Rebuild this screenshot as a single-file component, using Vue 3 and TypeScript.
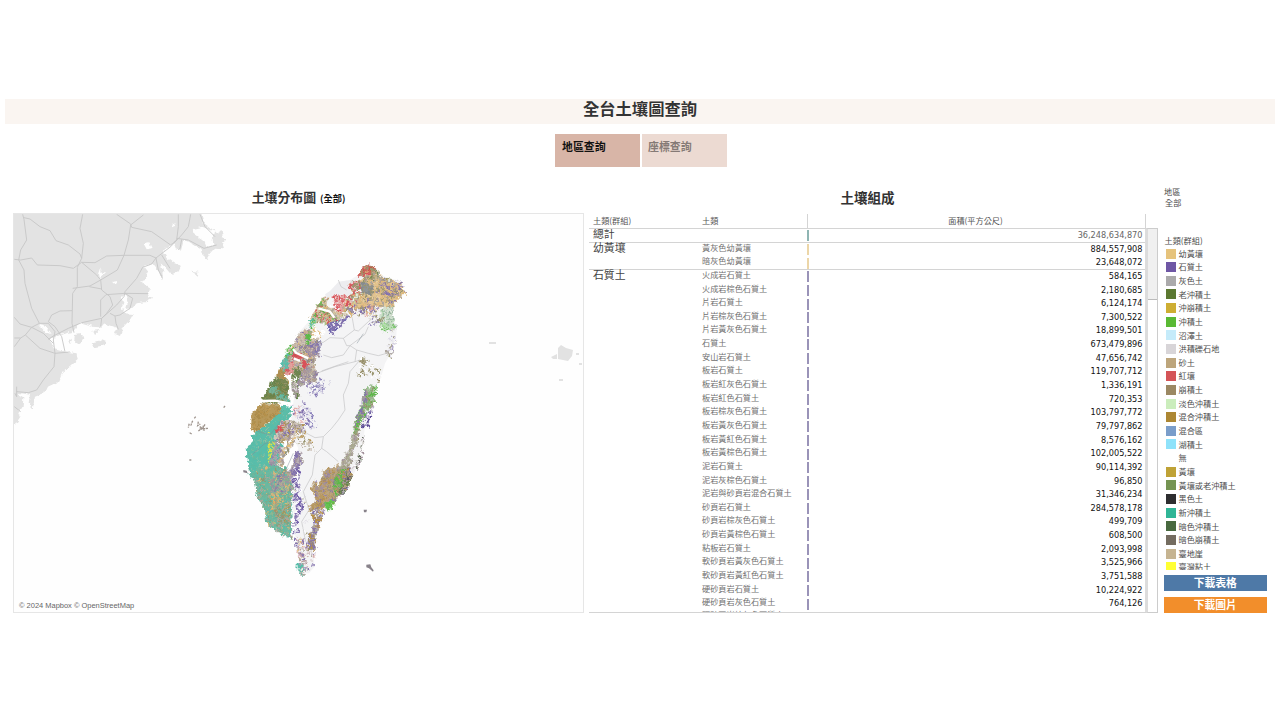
<script setup lang="ts">
interface Row { group?: string; name: string; area: string; color: string; line?: boolean; total?: boolean }

const PURPLE = '#9a93b8'
const stony: [string, string][] = [
  ['火成岩石質土', '584,165'], ['火成岩棕色石質土', '2,180,685'], ['片岩石質土', '6,124,174'],
  ['片岩棕灰色石質土', '7,300,522'], ['片岩黃灰色石質土', '18,899,501'], ['石質土', '673,479,896'],
  ['安山岩石質土', '47,656,742'], ['板岩石質土', '119,707,712'], ['板岩紅灰色石質土', '1,336,191'],
  ['板岩紅色石質土', '720,353'], ['板岩棕灰色石質土', '103,797,772'], ['板岩黃灰色石質土', '79,797,862'],
  ['板岩黃紅色石質土', '8,576,162'], ['板岩黃棕色石質土', '102,005,522'], ['泥岩石質土', '90,114,392'],
  ['泥岩灰棕色石質土', '96,850'], ['泥岩與砂頁岩混合石質土', '31,346,234'], ['砂頁岩石質土', '284,578,178'],
  ['砂頁岩棕灰色石質土', '499,709'], ['砂頁岩黃棕色石質土', '608,500'], ['粘板岩石質土', '2,093,998'],
  ['軟砂頁岩黃灰色石質土', '3,525,966'], ['軟砂頁岩黃紅色石質土', '3,751,588'], ['硬砂頁岩石質土', '10,224,922'],
  ['硬砂頁岩灰色石質土', '764,126'], ['硬砂頁岩棕灰色石質土', ''],
]
const rows: Row[] = [
  { group: '總計', name: '', area: '36,248,634,870', color: '#8fb5b3', line: true, total: true },
  { group: '幼黃壤', name: '黃灰色幼黃壤', area: '884,557,908', color: '#ecd6a8' },
  { name: '暗灰色幼黃壤', area: '23,648,072', color: '#ecd6a8', line: true },
  ...stony.map(([name, area], i) => ({ group: i === 0 ? '石質土' : undefined, name, area, color: PURPLE })),
]

const legend: [string, string][] = [
  ['幼黃壤', '#e6c37c'], ['石質土', '#6f57a5'], ['灰色土', '#abaaab'], ['老沖積土', '#5c7831'],
  ['沖崩積土', '#ceae33'], ['沖積土', '#5ab934'], ['沼澤土', '#c5ebfa'], ['洪積礫石地', '#d8d5d8'],
  ['砂土', '#bda57b'], ['紅壤', '#d45457'], ['崩積土', '#9b8863'], ['淡色沖積土', '#cbedbc'],
  ['混合沖積土', '#ad8733'], ['混合區', '#7a9dca'], ['湖積土', '#8fe2fa'], ['無', '#ffffff'],
  ['黃壤', '#bfa236'], ['黃壤或老沖積土', '#759452'], ['黑色土', '#2e2e30'], ['新沖積土', '#30b596'],
  ['暗色沖積土', '#48693f'], ['暗色崩積土', '#746c60'], ['臺地崖', '#c6b491'], ['臺灣粘土', '#ffff33'],
]

/* Soil regions: outline, optional base fill, speckle palette, speckle count and size */
interface Region { pts: string; base?: string; colors: string[]; n: number; s: number }
const T = '#58bda9', TN = '#deb877', PU = '#8373ae', OL = '#99946e', GR = '#aea79c', GD = '#66834a'
const RD = '#d8525a', GN = '#5cb848', BR = '#b58f48', LG = '#b9dbb5', MV = '#a3929c', PK = '#e3a5a0'
const regions: Region[] = [
  { pts: '375,75 398,58 440,66 470,78 500,82 500,104 516,110 490,130 465,158 425,150 395,165 350,152 362,130 385,118 378,95', base: '#e2c391', colors: [TN, TN, TN, PU, OL, '#d5b48a', '#e9cf9c', GR], n: 620, s: 4 },
  { pts: '455,85 480,95 470,118 448,112', colors: [PU, '#6a62ac', TN], n: 50, s: 5 },
  { pts: '480,78 500,78 498,100 484,95', colors: [PU], n: 22, s: 4 },
  { pts: '395,145 430,150 425,180 400,192 388,175', colors: [TN, PK, PU, OL], n: 70, s: 4 },
  { pts: '382,80 400,85 415,95 410,120 385,115 372,98', base: '#90959a', colors: ['#8b9195', '#82888f', OL], n: 60, s: 4 },
  { pts: '400,28 424,40 420,57 400,54 385,67 371,60 382,36', base: '#cf6b66', colors: [RD, RD, OL, TN, '#bf5b45'], n: 110, s: 4 },
  { pts: '418,42 428,45 436,60 470,75 470,82 400,72 385,80 384,66 402,54', colors: [TN, OL, '#e2c391', GR, GD], n: 130, s: 4 },
  { pts: '345,75 375,80 375,95 355,108 338,98', colors: [RD, TN, OL, GR, RD], n: 110, s: 4 },
  { pts: '295,118 330,118 352,135 315,170 290,185 265,165 290,150', colors: [RD, RD, '#fff', PK], n: 230, s: 5 },
  { pts: '335,120 375,105 385,118 350,145 338,165 322,160', colors: [GR, TN, LG, OL, RD], n: 105, s: 4 },
  { pts: '262,128 278,128 275,150 310,172 335,175 290,205 260,205 228,200 222,190', base: '#d6c9b1', colors: [OL, GR, TN, GN, RD, '#c5b695'], n: 260, s: 4 },
  { pts: '225,190 242,195 240,212 220,218', colors: [GN, T, LG], n: 50, s: 4 },
  { pts: '275,205 340,180 325,195 285,235 280,220', colors: [PU, '#6a62ac'], n: 60, s: 5 },
  { pts: '330,150 400,155 385,178 345,180', colors: [PU, TN, OL], n: 70, s: 4 },
  { pts: '440,160 474,153 473,190 482,216 440,212 425,205', base: '#d3dfd0', colors: [LG, '#8fae98', '#a6bbb0', '#c7dfc4', '#e4ebe2'], n: 180, s: 4 },
  { pts: '430,197 450,205 482,210 470,222 440,222', colors: [GN, LG, '#8ed67d'], n: 45, s: 5 },
  { pts: '400,205 445,180 445,190 400,218', colors: [PU, OL], n: 30, s: 4 },
  { pts: '472,218 485,222 482,240 472,300 448,310 455,265', colors: [PU, OL, GR, '#dedbe6'], n: 60, s: 4 },
  { pts: '190,235 212,220 250,235 248,262 238,320 245,372 232,385 190,360 150,350 145,310 172,272', base: '#cfc5b6', colors: [GR, MV, '#c6a28b', OL, '#b7a999', '#d2c6b4', PU, TN], n: 650, s: 4 },
  { pts: '212,232 225,230 222,258 215,268', colors: [GN], n: 26, s: 5 },
  { pts: '163,268 178,282 150,312 146,305', colors: [GN, GN, T], n: 55, s: 4 },
  { pts: '235,215 262,230 255,248 225,242', colors: ['#f2eee5', '#fff', TN], n: 70, s: 5 },
  { pts: '220,260 258,258 250,300 215,300', colors: [PU, MV, '#8683ad'], n: 120, s: 4 },
  { pts: '172,292 205,300 198,314 170,307', base: RD, colors: [RD, '#c9504f'], n: 26, s: 4 },
  { pts: '152,320 175,318 168,352 150,358', base: '#d76b70', colors: [RD, PK], n: 60, s: 4 },
  { pts: '200,315 218,320 215,337 205,338', base: RD, colors: [RD], n: 14, s: 4 },
  { pts: '170,340 195,332 192,370 172,390', colors: [GD, OL, '#6f8651'], n: 70, s: 5 },
  { pts: '146,308 162,315 150,352 135,340', base: '#5dbfae', colors: [T, GR], n: 50, s: 4 },
  { pts: '135,338 150,350 150,366 170,378 150,376 122,366', base: '#b99551', colors: [BR, '#a68c57'], n: 60, s: 4 },
  { pts: '170,380 185,385 190,420 180,430 165,395', colors: [GR, MV, GD], n: 60, s: 4 },
  { pts: '120,366 158,378 162,438 120,443 78,440 98,398', base: '#73864f', colors: [GD, '#7e8a4d', '#6c844f', OL, '#8c8c55'], n: 260, s: 4 },
  { pts: '106,378 125,405 162,430 160,440 130,430 105,400', colors: [T, '#78b398'], n: 65, s: 5 },
  { pts: '82,443 120,448 142,455 135,480 95,505 60,535 48,520 50,480 62,462', base: '#b89a5c', colors: [BR, '#b8985b', '#a88a49', '#c29d5a'], n: 260, s: 4 },
  { pts: '140,452 168,455 165,490 140,510 120,530 95,545 60,560 35,575 40,640 60,680 95,665 110,610 135,585 125,545 150,520 135,480', base: '#5dbfab', colors: [T, T, '#66c3b1', '#65aa93'], n: 100, s: 4 },
  { pts: '50,540 95,508 140,472 168,460 160,495 135,520 135,552 110,590 115,625 100,670 72,690 45,655 50,620 35,610 40,580 52,565', base: '#59bdaa', colors: [T, '#63b9a1', '#71b897', '#55bdab', '#8cc0a6'], n: 420, s: 4 },
  { pts: '95,530 112,540 90,575 100,590 88,618 98,622 108,600 112,555', colors: ['#d8e04d', '#e9ec4c', T], n: 64, s: 5 },
  { pts: '140,495 170,495 200,510 215,535 185,530 175,550 140,565 118,555 125,525', base: '#d1c6b9', colors: [GR, MV, BR, OL, PU, '#c3ac92', '#fff'], n: 230, s: 4 },
  { pts: '122,512 145,505 135,525 120,525', colors: [RD, PK], n: 28, s: 4 },
  { pts: '120,560 140,570 132,620 112,645 105,610', base: '#b0a4b2', colors: [PU, MV, T, GR], n: 130, s: 4 },
  { pts: '140,575 180,545 170,570 145,600 140,640 118,650', colors: [MV, GR, OL, TN], n: 120, s: 4 },
  { pts: '182,590 200,590 195,620 175,660 150,680 135,672 168,640', base: '#beb4be', colors: [PU, MV, GR], n: 170, s: 4 },
  { pts: '65,640 110,630 150,640 172,680 170,750 168,850 130,830 93,803 90,765 65,720 60,680 40,660', base: '#6db8a0', colors: [T, T, '#77ae8d', GR, OL, '#5bbaa4', TN], n: 700, s: 4 },
  { pts: '100,675 135,650 170,655 172,700 130,710 112,735', colors: [PU, MV, TN, GR], n: 210, s: 4 },
  { pts: '105,720 130,700 125,770 105,765', colors: [TN, '#dda461', T], n: 100, s: 4 },
  { pts: '118,760 165,740 165,800 130,810', colors: [OL, GR, '#78a486', BR], n: 120, s: 4 },
  { pts: '178,625 190,630 192,710 205,750 190,770 185,830 172,830 180,750 170,700', colors: [PU, '#6f5ba8', PU, '#fff'], n: 180, s: 5 },
  { pts: '172,840 205,850 200,920 188,910', colors: [PU, GR, TN, '#dba8b8'], n: 50, s: 4 },
  { pts: '190,870 240,870 235,935 215,955 188,930', colors: [PU, '#b49a9e', '#d7b0ad', GR], n: 62, s: 4 },
  { pts: '188,925 200,925 202,960 190,955', colors: [T, T, GR], n: 30, s: 5 },
  { pts: '225,765 265,765 255,805 240,835 234,882 215,875 222,830 235,800', colors: [PU, PU, BR, GR], n: 170, s: 5 },
  { pts: '220,835 240,840 235,880 215,875', colors: [BR, OL, PU], n: 80, s: 4 },
  { pts: '270,640 300,635 325,625 345,640 348,675 328,705 300,735 275,755 225,768 218,758 245,738 228,700 240,670 250,700 262,660', base: '#bda580', colors: [BR, BR, PU, OL, '#b79a62', MV], n: 500, s: 4 },
  { pts: '305,640 330,625 318,690 298,720 290,700', colors: [GN, '#80b369', OL], n: 75, s: 5 },
  { pts: '270,740 298,732 288,760 275,762', base: '#67c653', colors: [GN], n: 16, s: 5 },
  { pts: '325,650 352,630 345,675 322,715 308,710 320,685', colors: ['#5a5a60', PU, GD, MV], n: 75, s: 4 },
  { pts: '410,388 422,395 408,455 390,470 375,500 365,535 352,540 360,500 370,470 382,440 388,405', base: '#a9c49f', colors: [GN, '#85ad78', OL, GR, '#77bb68'], n: 210, s: 5 },
  { pts: '388,400 396,405 380,470 355,530 355,510 378,440', colors: [PU, MV], n: 55, s: 4 },
  { pts: '405,455 412,455 398,505 385,515 380,500', colors: [PU, '#5b4b95', '#fff'], n: 36, s: 5 },
  { pts: '355,535 370,535 355,580 345,625 325,640 310,640 330,600 345,570', base: '#cbcac1', colors: [GR, '#a9aa90', OL, MV], n: 190, s: 4 },
  { pts: '376,545 388,545 378,600 365,640 350,650 355,630 372,590', colors: ['#58654e', GR, '#555', MV, '#fff'], n: 60, s: 4 },
  { pts: '375,305 390,300 400,325 430,335 430,370 400,365 360,355', colors: [OL, '#98906a', '#fff'], n: 50, s: 5 },
  { pts: '215,370 240,355 265,370 270,395 240,430 220,420', colors: [PU, '#8c83bc', '#fff'], n: 65, s: 4 },
  { pts: '200,440 225,460 245,520 215,515 190,480', colors: [PU, '#8c83bc', '#dddbe8'], n: 60, s: 4 },
  { pts: '165,440 195,450 210,500 175,495', colors: [PU, '#c9c3dc', PK], n: 34, s: 4 },
  { pts: '215,340 245,345 240,375 190,390 185,375', colors: [GR, MV, PU], n: 95, s: 4 },
  { pts: '190,530 230,550 240,590 215,580 185,570', colors: [OL, BR, '#b7a999'], n: 34, s: 4 },
  { pts: '245,375 300,370 250,410', colors: ['#c9c6dc', '#aaa5c9'], n: 30, s: 3 },
  { pts: '200,700 222,770 215,850 198,830', colors: ['#d9d6df', OL, '#fff'], n: 20, s: 3 },
]

let seed = 20240
const rnd = () => {
  seed = (seed * 1664525 + 1013904223) % 4294967296
  return seed / 4294967296
}
const inside = (x: number, y: number, p: number[][]) => {
  let r = false
  for (let i = 0, j = p.length - 1; i < p.length; j = i++) {
    const [xi, yi] = p[i], [xj, yj] = p[j]
    if ((yi > y) !== (yj > y) && x < ((xj - xi) * (y - yi)) / (yj - yi) + xi) r = !r
  }
  return r
}
const painted = regions.map((g) => {
  const p = g.pts.split(' ').map((q) => q.split(',').map(Number))
  const xs = p.map((q) => q[0]), ys = p.map((q) => q[1])
  const x0 = Math.min(...xs), x1 = Math.max(...xs), y0 = Math.min(...ys), y1 = Math.max(...ys)
  const d: Record<string, string> = {}
  let k = 0, guard = 0
  while (k < g.n && guard++ < g.n * 12) {
    const x = x0 + rnd() * (x1 - x0), y = y0 + rnd() * (y1 - y0)
    if (!inside(x, y, p)) continue
    k++
    const c = g.colors[Math.floor(rnd() * g.colors.length)]
    const f = () => ((rnd() - 0.5) * g.s * 2).toFixed(1)
    const w = (g.s * (0.5 + rnd())).toFixed(1)
    d[c] = (d[c] || '') + `M${x.toFixed(1)} ${y.toFixed(1)}l${w} ${f()}l${f()} ${w}l-${w} ${f()}z`
  }
  return { pts: g.pts, base: g.base || 'none', marks: Object.entries(d) }
})

const roads = [
  'M68 103L72 118L80 180L62 210L56 240L72 270L75 310L95 385L118 430L95 442L76 465L62 474L43 500',
  'M72 113L90 117L120 140L150 152L168 182L205 195L240 222L245 235',
  'M248 103L240 145L250 190L245 235L232 262L232 320L218 340L216 430L222 458',
  'M43 238L62 240L95 234L112 255L180 257L220 265L245 247L285 248L320 228L372 226L450 226L468 234L512 200L545 165L565 140L572 103',
  'M245 247L290 285L302 300L305 330L330 350L338 375L320 400L305 415L302 440',
  'M350 103L392 132L395 142L455 155L512 195',
  'M430 105L392 135L385 180L372 226L352 270L302 300L270 318L218 325',
  'M268 320L305 327', 'M468 234L455 252L428 262L410 295L375 335L372 350L350 375L305 415L245 428L205 445L160 468L145 478',
  'M318 344L375 340L445 341', 'M375 340L398 355L390 385L360 405L345 408L330 400',
  'M318 344L302 360V410', 'M345 408L348 430L355 448', 'M535 103V140L530 180L512 195',
  'M530 175L565 180L612 205L650 195', 'M600 103L615 140L645 170', 'M545 178L540 205L535 210',
  'M468 234L475 270L487 292', 'M485 225L510 265',
  'M216 392L180 393L155 405L145 425L165 440L185 470L195 515', 'M118 430L145 430L165 455L160 480L165 520L210 516',
  'M76 465L120 505L165 520L162 560L130 600L110 630L85 638L50 635', 'M43 412L60 432L95 442L130 460L160 490', 'M43 474L62 474', 'M50 620V650L45 640', 'M43 680L62 695',
]
const counties = [
  'M345 172L352 190L358 225L325 250L285 248L265 262L245 265', 'M358 225L370 228L400 200L425 180', 'M325 250L335 272L345 272L390 238L400 215',
  'M345 272L325 300L290 308L265 300', 'M345 272L365 285L400 295L430 302L455 295L470 280', 'M365 285L360 320L300 335L245 355',
  'M310 75L318 95L335 105', 'M360 320L375 315L345 350L340 385L325 420L330 465L310 495L290 520L265 545L240 548L215 535L175 495',
  'M340 320L310 330L260 348', 'M265 545L260 580L275 590L310 620', 'M260 580L240 600L232 660L205 710', 'M205 710L222 765L200 800L212 860',
]
</script>

<template>
  <main class="dash">
    <h1 class="title">全台土壤圖查詢</h1>
    <nav class="tabs">
      <div class="tab active">地區查詢</div>
      <div class="tab">座標查詢</div>
    </nav>
    <section class="content">
      <div class="map-col">
        <h2 class="panel-title">土壤分布圖 <small>(全部)</small></h2>
        <div class="map">
          <svg viewBox="14 214 569 398" width="569" height="398">
            <defs>
              <filter id="ragged" x="-5%" y="-5%" width="110%" height="110%" color-interpolation-filters="sRGB">
                <feTurbulence type="fractalNoise" baseFrequency="0.09" numOctaves="3" seed="7" result="n" />
                <feDisplacementMap in="SourceGraphic" in2="n" scale="18" xChannelSelector="R" yChannelSelector="G" />
              </filter>
              <filter id="coast" x="-5%" y="-5%" width="110%" height="110%" color-interpolation-filters="sRGB">
                <feTurbulence type="fractalNoise" baseFrequency="0.06" numOctaves="3" seed="3" result="n" />
                <feDisplacementMap in="SourceGraphic" in2="n" scale="14" xChannelSelector="R" yChannelSelector="G" />
              </filter>
            </defs>
            <g transform="translate(0 180) scale(.33333)">
              <g filter="url(#coast)">
                <path class="land" d="M30 90H600L612 130L640 150L650 158L665 150L668 172L680 175L666 188L672 205L645 203L630 220L620 237L605 225L602 207L585 195L570 185L550 182L542 212L530 208L522 185L488 213L500 235L520 250L547 258L540 272L515 285L495 262L482 250L492 285L485 300L474 272L458 252L432 262L446 280L436 300L420 305L450 322L444 350L457 356L440 366L410 370L398 383L372 388L370 400L398 402L385 425L370 440L360 468L345 462L352 445L310 430L300 442L275 440L240 430L215 460L180 465L150 480L160 505L200 515L230 520L233 540L210 560L185 580L175 605L140 622L132 640L105 650L98 688L86 668L90 645L62 640L50 640L70 652L68 680L55 700L60 712L45 735H30Z" />
                <path class="land" d="M225 465L245 462L250 475L240 492L222 488ZM275 490L300 485L305 474L318 480L314 496L282 502ZM280 452L300 450L285 462ZM572 272L595 275L594 287ZM204 478L216 480L210 490Z" />
                <path class="water" d="M575 148L610 140L645 155L638 180L640 195L620 202L612 182L580 158ZM432 193L448 190L455 205L440 208ZM303 262L305 278L318 276L305 290L300 302L297 280ZM340 305L357 302L345 315ZM515 135L530 130L525 140ZM365 350L380 346L384 358L375 388L360 390L370 368ZM172 470L205 456L200 472L188 476L198 500L182 508L158 498L152 484ZM118 435L140 440L155 462L135 455ZM250 430L280 438L265 450Z" />
              </g>
              <path class="road" v-for="(r, i) in roads" :key="i" :d="r" />
            </g>
            <path class="isle" d="M558 348L561 345L566 348L573 350L572 356L568 361L558 359ZM551 357L557 354V359L553 359ZM489 342H496V344H489ZM576 353H579V355H576ZM579 363H582V365H579ZM559 379H563V381H559Z" />
            <g transform="translate(235 255) scale(.33333)">
              <path class="interior" d="M400 28L425 40L435 60L465 70L495 78L500 100L516 112L490 130L475 155L472 185L485 215L484 240L470 290L450 325L440 360L425 390L412 430L390 515L385 555L375 600L360 650L335 690L310 725L265 775L240 840L236 880L238 935L222 955L195 955L188 880L180 840L170 700L175 640L190 580L165 530L180 400L190 370L190 235L225 195L262 130L285 110L310 80L345 75L370 60Z" />
              <path class="coastal" d="M270 118L285 108L312 80L345 76L340 100L355 110L340 122L295 120L278 130Z" />
              <path class="county" v-for="(c, i) in counties" :key="i" :d="c" />
              <g filter="url(#ragged)">
                <g v-for="(g, i) in painted" :key="i">
                  <polygon :points="g.pts" :fill="g.base" />
                  <path v-for="[c, d] in g.marks" :key="c" :d="d" :fill="c" />
                </g>
              </g>
              <path class="river" d="M78 438L120 437L172 447M152 362L165 375L167 410L174 435M174 282L184 294L220 310M176 310L195 318M250 160L285 170L298 188" />
              <path class="stream" d="M65 528L105 540L140 495M50 600L90 565L130 558M122 705L123 790M140 610L165 580M175 595L150 650M120 700L142 665L160 640M366 265L385 236" />
              <path class="isle-dark" d="M394 929L406 928L409 937L416 946L414 950L402 940L394 937ZM386 764H396L394 772H387ZM25 645L35 647L38 655L25 652Z" />
              <path class="penghu" d="M-127 497L-132 510L-138 508L-140 518M-122 490L-118 485M-110 500L-112 512L-104 507M-106 515L-98 520L-110 528M-96 512L-92 530M-30 453L-34 458M-106 522L-80 520M-90 508L-100 525M-130 537L-138 532M-137 615H-131" />
            </g>
          </svg>
          <span class="attribution">© 2024 Mapbox © OpenStreetMap</span>
        </div>
      </div>

      <div class="table-col">
        <h2 class="panel-title">土壤組成</h2>
        <div class="table-wrap">
          <div class="table">
            <div class="row head">
              <span>土類(群組)</span><span>土類</span><span class="area">面積(平方公尺)</span>
            </div>
            <div class="body">
              <div v-for="r in rows" :key="r.name" class="row" :class="{ line: r.line, total: r.total }">
                <span class="group">{{ r.group }}</span>
                <span class="name">{{ r.name }}</span>
                <span class="area"><i class="bar" :style="{ background: r.color }"></i>{{ r.area }}</span>
              </div>
            </div>
          </div>
          <div class="scroll"><div class="thumb"></div></div>
        </div>
      </div>

      <aside class="side">
        <div class="filter"><div>地區</div><div class="value">全部</div></div>
        <div class="legend-title">土類(群組)</div>
        <ul class="legend">
          <li v-for="[n, c] in legend" :key="n"><i :style="{ background: c }"></i>{{ n }}</li>
        </ul>
        <button class="btn blue">下載表格</button>
        <button class="btn orange">下載圖片</button>
      </aside>
    </section>
  </main>
</template>

<style>
body { margin: 0; background: #fff; }
</style>

<style scoped>
.dash {
  box-sizing: border-box;
  width: 1280px;
  height: 720px;
  padding-top: 99px;
  overflow: hidden;
  background: #fff;
  color: #333;
  font-family: "Noto Sans CJK TC", "Noto Sans", sans-serif;
  font-size: 8.17px;
}
.title {
  margin: 0 5px;
  height: 25px;
  line-height: 18px;
  background: #faf5f1;
  text-align: center;
  font-size: 16.3px;
  font-weight: 700;
}
.tabs { display: flex; gap: 2px; margin: 10px 0 0 555px; }
.tab {
  box-sizing: border-box;
  width: 85px;
  height: 33px;
  padding-left: 7px;
  line-height: 24px;
  background: #ecdad2;
  color: #857a76;
  font-size: 10.9px;
  font-weight: 700;
}
.tab + .tab { padding-left: 6px; }
.tab.active { background: #d8b5a7; color: #111; }
.content {
  display: grid;
  grid-template-columns: 571px 569px 104px;
  column-gap: 5px;
  margin: 19px 0 0 13px;
}
.panel-title {
  margin: 0;
  height: 28px;
  line-height: 22px;
  font-size: 13.5px;
  font-weight: 700;
  text-align: center;
}
.table-col .panel-title { padding-right: 12px; }
.map-col .panel-title { font-size: 12.9px; }
.panel-title small { font-size: 9.2px; color: #111; margin-left: 1px; }
.map {
  display: grid;
  width: 569px;
  height: 398px;
  margin-top: -1px;
  border: 1px solid #e6e6e6;
  background: #fefefe;
  overflow: hidden;
}
.map svg, .attribution { grid-area: 1 / 1; }
.attribution {
  align-self: end;
  padding: 0 0 1px 5px;
  font: 7.48px/10px "Liberation Sans", Arial, sans-serif;
  color: #666;
}
.land { fill: #e3e3e3; }
.water { fill: #fefefe; }
.isle { fill: #e2e2e2; }
.road { fill: none; stroke: #c6c6c6; stroke-width: 2.7; stroke-linejoin: round; }
.interior { fill: #f4f4f5; }
.coastal { fill: #ededf0; }
.county { fill: none; stroke: #c2c2c4; stroke-width: 2; stroke-linejoin: round; }
.river { fill: none; stroke: #fff; stroke-width: 7; stroke-linejoin: round; }
.stream { fill: none; stroke: #7e8c96; stroke-width: 2; opacity: .7; }
.isle-dark { fill: #88828a; }
.penghu { fill: none; stroke: #9f958e; stroke-width: 4; stroke-dasharray: 7 2; }

.table-wrap { display: flex; height: 399px; }
.table {
  display: flex;
  flex-direction: column;
  width: 557px;
  height: 399px;
  box-sizing: border-box;
  border-bottom: 1px solid #d4d4d4;
  overflow: hidden;
}
.row {
  box-sizing: border-box;
  display: grid;
  grid-template-columns: 113px 105px 1fr;
  height: 13.65px;
  flex: none;
  white-space: nowrap;
}
.row > span:first-child { padding-left: 4px; }
.row.head { height: 15px; line-height: 14px; border-bottom: 1px solid #d4d4d4; color: #555; }
.head .area { text-align: center; border-left: 1px solid #d4d4d4; border-right: 1px solid #d4d4d4; padding-right: 2px; }
.body { height: 383px; overflow: hidden; }
.body .row.line { box-shadow: inset 0 -1px #d4d4d4; }
.group { font-size: 10.85px; line-height: 9.8px; color: #444; }
.name { color: #707070; line-height: 10.4px; }
.row:last-child .name { line-height: 7px; }
.body .area {
  display: flex;
  justify-content: space-between;
  padding-right: 2.5px;
  border-right: 1px solid #ddd;
  font-family: "DejaVu Sans", sans-serif;
  font-size: 8.17px;
  line-height: 13.4px;
  color: #111;
}
.body .total .area { color: #666; }
.bar { width: 2px; height: 11px; margin-top: 1.3px; }
.scroll {
  box-sizing: border-box;
  width: 12px;
  height: 385px;
  margin-top: 14px;
  border: 1px solid #ccc;
  border-left: 2px solid #dcdcdc;
  background: #fff;
}
.thumb { height: 70px; background: #f0f0f0; border-bottom: 1px solid #bbb; }

.side { color: #4c4c4c; }
.filter { height: 49px; line-height: 11px; }
.filter div { padding-left: 1px; }
.filter .value { padding-left: 2px; }
.legend-title { height: 12px; line-height: 12.6px; padding-left: 1.5px; }
.legend { margin: 0; padding: 0; height: 323px; overflow: hidden; list-style: none; }
.legend li { display: flex; align-items: center; height: 13.65px; line-height: 13.65px; padding-left: 2.5px; }
.legend li:first-child { margin-top: -.3px; }
.legend i { width: 10px; height: 10px; margin-right: 3px; }
.btn {
  display: block;
  width: 103.5px;
  height: 16px;
  margin: 5px 0 0 .5px;
  padding: 0 0 2px;
  border: 0;
  line-height: 14px;
  color: #fff;
  font-family: inherit;
  font-size: 10.8px;
  font-weight: 700;
}
.blue { background: #4e79a7; margin-top: 5px; }
.orange { background: #f28e2b; margin-top: 6px; }
</style>
